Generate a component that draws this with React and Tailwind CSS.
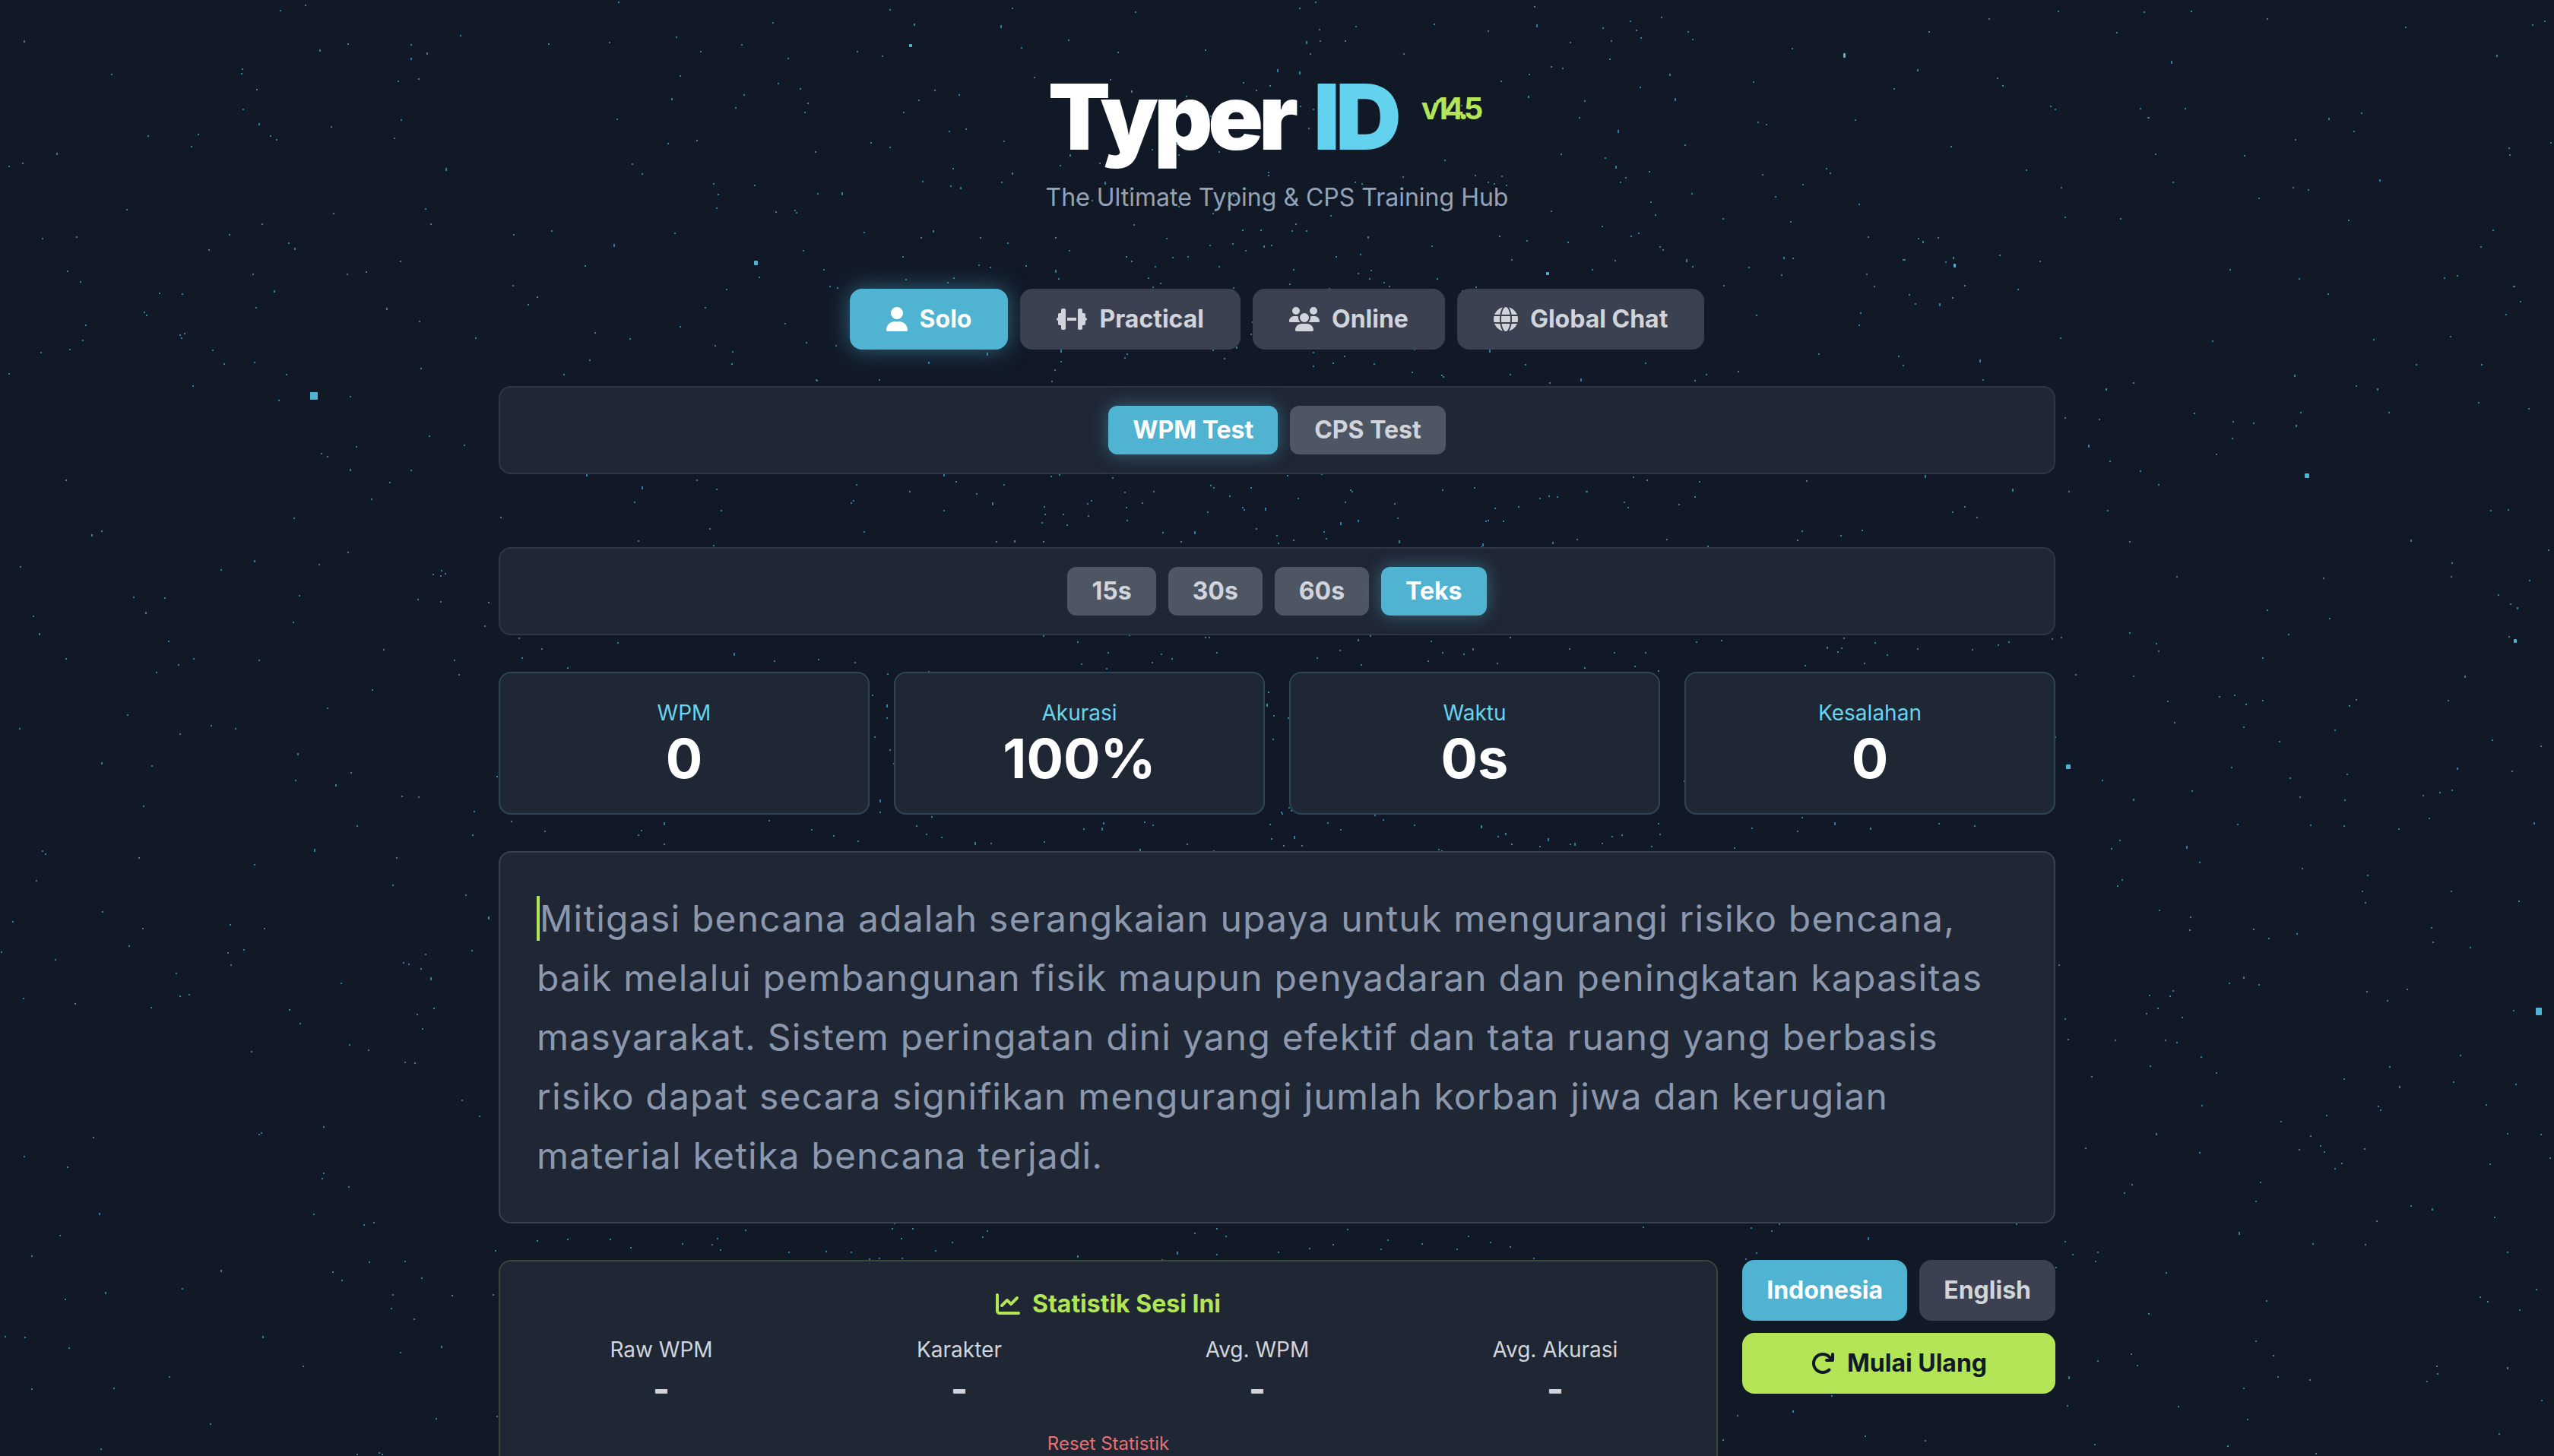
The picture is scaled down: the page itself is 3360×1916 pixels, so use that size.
import { FaUser, FaDumbbell, FaUsers, FaGlobe, FaChartLine, FaArrowRotateRight } from 'react-icons/fa6';

// seeded so the star field stays the same on every load
const makeStars = () => {
  let seed = 20240517;
  const rand = () => {
    seed = (seed + 0x6d2b79f5) | 0;
    let t = Math.imul(seed ^ (seed >>> 15), 1 | seed);
    t = (t + Math.imul(t ^ (t >>> 7), 61 | t)) ^ t;
    return ((t ^ (t >>> 14)) >>> 0) / 4294967296;
  };
  const stars = [];
  for (let i = 0; i < 1000; i++) {
    stars.push({ x: rand() * 3360, y: rand() * 1916, w: 2, h: rand() > 0.9 ? 3 : 2 });
  }
  // denser cloud round the middle of the page
  for (let i = 0; i < 1400; i++) {
    const x = 1680 + (rand() + rand() + rand() - 1.5) * 1000;
    const y = 958 + (rand() + rand() - 1) * 1300;
    stars.push({ x, y, w: 2, h: rand() > 0.85 ? 4 : 2 });
  }
  return stars;
};

const stars = makeStars();

const bigStars = [
  [408, 516, 10, 10],
  [2718, 1006, 6, 6],
  [3336, 1326, 8, 10],
  [3032, 623, 6, 6],
  [992, 343, 5, 6],
  [3307, 841, 4, 5],
  [2425, 70, 3, 6],
  [2570, 347, 3, 5],
  [1196, 58, 4, 4],
  [2034, 358, 4, 4],
];

const navItems = [
  { label: 'Solo', icon: FaUser, size: 'h-8 w-7', active: true },
  { label: 'Practical', icon: FaDumbbell, size: 'h-8 w-10' },
  { label: 'Online', icon: FaUsers, size: 'h-8 w-10' },
  { label: 'Global Chat', icon: FaGlobe, size: 'h-8 w-8' },
];

const statCards = [
  { label: 'WPM', value: '0' },
  { label: 'Akurasi', value: '100%' },
  { label: 'Waktu', value: '0s' },
  { label: 'Kesalahan', value: '0' },
];

const sessionStats = ['Raw WPM', 'Karakter', 'Avg. WPM', 'Avg. Akurasi'];

const TEXT =
  'itigasi bencana adalah serangkaian upaya untuk mengurangi risiko bencana, baik melalui pembangunan fisik maupun penyadaran dan peningkatan kapasitas masyarakat. Sistem peringatan dini yang efektif dan tata ruang yang berbasis risiko dapat secara signifikan mengurangi jumlah korban jiwa dan kerugian material ketika bencana terjadi.';

const SmallButton = ({ children, active }) => (
  <button
    className={
      active
        ? 'rounded-xl bg-[#50b3d2] px-8 py-2 text-[32px] leading-12 font-bold text-white shadow-[0_0_24px_rgba(80,179,210,0.45)]'
        : 'rounded-xl bg-[#4e5563] px-8 py-2 text-[32px] leading-12 font-bold text-[#d1d5db]'
    }
  >
    {children}
  </button>
);

const App = () => {
  return (
    <div className="relative min-h-screen overflow-hidden bg-[#111927] font-['Inter',sans-serif]">
      <svg className="absolute top-0 left-0 h-[1916px] w-[3360px]" viewBox="0 0 3360 1916">
        {stars.map((s, i) => (
          <rect key={i} x={Math.round(s.x)} y={Math.round(s.y)} width={s.w} height={s.h} fill="#2f7f9c" />
        ))}
        {bigStars.map(([x, y, w, h], i) => (
          <rect key={i} x={x} y={y} width={w} height={h} rx="1" fill="#4fb4d4" />
        ))}
      </svg>

      <div className="relative mx-auto w-[2048px] pt-[94px] pb-16">
        <header className="text-center">
          <h1 className="pr-9 text-[120px] leading-[120px] font-black tracking-tighter text-white">
            Typer <span className="ml-2 text-[#63d2ef]">ID</span>
            <span className="relative -top-10 ml-8 text-[40px] leading-none font-bold text-[#b3e556]">v14.5</span>
          </h1>
          <p className="mt-[22px] text-[32px] leading-12 text-[#94a3b8]">The Ultimate Typing &amp; CPS Training Hub</p>
        </header>

        <nav className="mt-24 flex justify-center gap-4">
          {navItems.map(({ label, icon: Icon, size, active }) => (
            <button
              key={label}
              className={
                active
                  ? 'flex items-center gap-4 rounded-2xl bg-[#50b3d2] px-12 py-4 text-[32px] leading-12 font-bold text-white shadow-[0_0_30px_rgba(80,179,210,0.5)]'
                  : 'flex items-center gap-4 rounded-2xl bg-[#3b4150] px-12 py-4 text-[32px] leading-12 font-bold text-[#d1d5db]'
              }
            >
              <Icon className={size} />
              {label}
            </button>
          ))}
        </nav>

        <div className="mt-12 flex justify-center gap-4 rounded-2xl border-2 border-[#2f3644] bg-[#1f2634] p-6">
          <SmallButton active>WPM Test</SmallButton>
          <SmallButton>CPS Test</SmallButton>
        </div>

        <div className="mt-24 flex justify-center gap-4 rounded-2xl border-2 border-[#2f3644] bg-[#1f2634] p-6">
          <SmallButton>15s</SmallButton>
          <SmallButton>30s</SmallButton>
          <SmallButton>60s</SmallButton>
          <SmallButton active>Teks</SmallButton>
        </div>

        <div className="mt-12 grid grid-cols-4 gap-8">
          {statCards.map((card) => (
            <div key={card.label} className="rounded-2xl border-2 border-[#2c4656] bg-[#1f2634] p-8 text-center">
              <div className="text-[28px] leading-10 text-[#67d5ee]">{card.label}</div>
              <div className="text-[72px] leading-20 font-bold text-white">{card.value}</div>
            </div>
          ))}
        </div>

        <div className="mt-12 rounded-2xl border-2 border-[#374151] bg-[#1f2634] p-12 text-[48px] leading-[78px] tracking-wide text-[#8b98ae]">
          <span className="border-l-4 border-[#b3e556]">M</span>
          {TEXT}
        </div>

        <div className="mt-12 flex items-start gap-8">
          <div className="w-[1604px] rounded-2xl border-2 border-[#374a38] bg-[#1f2634] p-8 text-center">
            <h3 className="mb-4 flex items-center justify-center gap-4 text-[32px] leading-12 font-bold text-[#b3e556]">
              <FaChartLine className="h-8 w-8" />
              Statistik Sesi Ini
            </h3>
            <div className="grid grid-cols-4 gap-8">
              {sessionStats.map((label) => (
                <div key={label}>
                  <div className="text-[28px] leading-10 text-[#d1d5db]">{label}</div>
                  <div className="text-[48px] leading-16 font-bold text-[#d1d5db]">-</div>
                </div>
              ))}
            </div>
            <button className="mt-6 text-[24px] leading-8 text-[#e87070]">Reset Statistik</button>
          </div>

          <div className="flex w-[412px] flex-col gap-4">
            <div className="flex gap-4">
              <button className="flex-1 rounded-2xl bg-[#50b3d2] py-4 text-[32px] leading-12 font-bold text-white">
                Indonesia
              </button>
              <button className="rounded-2xl bg-[#3b4150] px-8 py-4 text-[32px] leading-12 font-bold text-[#d1d5db]">
                English
              </button>
            </div>
            <button className="flex items-center justify-center gap-4 rounded-2xl bg-[#b3e556] py-4 text-[32px] leading-12 font-bold text-[#111827]">
              <FaArrowRotateRight className="h-8 w-8" />
              Mulai Ulang
            </button>
          </div>
        </div>
      </div>
    </div>
  );
};

export default App;
